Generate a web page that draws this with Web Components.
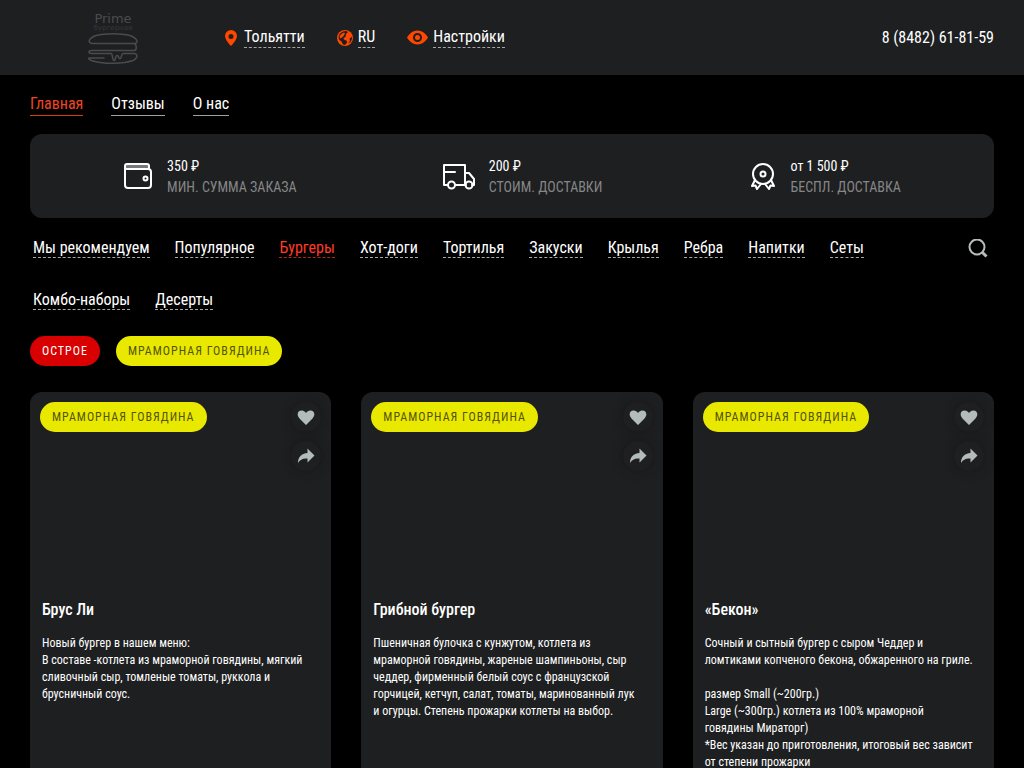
<!DOCTYPE html>
<html lang="ru">
<head>
<meta charset="utf-8">
<meta name="viewport" content="width=device-width, initial-scale=1">
<title>Prime Бургерная</title>
<style>
  body { margin: 0; background: #000; color: #fff; font: 16px/20px "Roboto Condensed", Roboto, sans-serif; overflow-x: hidden; }
</style>
</head>
<body>
<burger-page></burger-page>

<script>
const define = (name, html, extra) => customElements.define(name, class extends HTMLElement {
  connectedCallback() {
    if (this.shadowRoot) return;
    const t = document.createElement('template');
    t.innerHTML = html;
    this.attachShadow({ mode: 'open' }).append(t.content.cloneNode(true));
    if (extra) extra(this, this.shadowRoot);
  }
});

define('brand-logo', `
<style>
  :host { display: block; }
  a { display: flex; flex-direction: column; align-items: center; width: 50px; color: #4a4b4e; text-decoration: none; }
  .name { font: 13px/10px "DejaVu Sans", sans-serif; }
  .sub { font: 7px/8px "DejaVu Sans", sans-serif; color: #37393b; }
  svg { display: block; }
</style>
<a href="#" aria-label="Prime Бургерная">
  <span class="name">Prime</span><span class="sub">бургерная</span>
  <svg width="50" height="33" viewBox="0 0 50 33" fill="none" stroke="currentColor" stroke-width="1.5" stroke-linejoin="round" stroke-linecap="round">
    <path d="M4 11.500C-1 10.500 1 6 8 3.500 17 1 33 1 42 3.500c7 2.500 9 7 5 8H4"/>
    <path d="M46 11.500c3 1 3 7 0 7H4c-4 0-4 3 0 3h19c2 0 1 7 3 7s1-5 3-5 1 3 3 3 1-5 3-5h11c4 0 4 5-1 7-10 3.500-29 3.500-38 1-5-1-7-3-6-3.500h15"/>
  </svg>
</a>`);

define('header-link', `
<style>
  :host { display: flex; align-items: center; }
  a { display: flex; align-items: center; gap: 5px; color: #fff; text-decoration: none; }
  .text { line-height: 21px; border-bottom: 1px dashed #a4a5a5; }
</style>
<a href="#"><slot name="icon"></slot><span class="text"><slot></slot></span></a>`);

define('site-header', `
<style>
  :host { display: block; background: #1e1f21; }
  header { display: flex; align-items: center; height: 75px; padding: 0 30px; }
  brand-logo { margin: 3px 86px 0 58px; }
  nav { display: flex; gap: 32px; flex: 1; padding-bottom: 1px; }
  svg { display: block; fill: #ff4700; }
  .tel { color: #fff; text-decoration: none; }
</style>
<header>
  <brand-logo></brand-logo>
  <nav>
    <header-link><svg slot="icon" width="15" height="17" viewBox="0 0 15 17"><path fill-rule="evenodd" d="M7 1a6 6 0 0 1 6 6c0 4-6 10-6 10S1 11 1 7a6 6 0 0 1 6-6Zm0 4a2.500 2.500 0 1 0 0 5 2.500 2.500 0 0 0 0-5Z"/></svg>Тольятти</header-link>
    <header-link><svg slot="icon" width="16" height="17" viewBox="0 0 16 17"><circle cx="8" cy="9" r="8"/><path fill="#1e1f21" d="M6 2.500 9 2l2 1-2 2-.5 3-2 1 .5 1.500 3 1.500 0 1.500-2 2.500-2-.5-1.500-3-2.500-2-.5-3 1.500-3Z"/><path fill="#ff4700" d="M5 4.500 7 3.500l1 1L6.500 7 5 8.500 3 9.500 2.500 7Z"/><path fill="#1e1f21" d="M14.500 7.500 12.500 10l.5 2-2 2.500 2.500-1.500 1.500-3Z"/></svg>RU</header-link>
    <header-link><svg slot="icon" width="21" height="17" viewBox="0 0 21 17"><path fill-rule="evenodd" d="M10.500 1.500C16 1.500 19.500 6 21 8.500c-1.500 2.500-5 7-10.500 7S1.500 11 0 8.500C1.500 6 5 1.500 10.500 1.500Zm0 2.500a4.500 4.500 0 1 0 0 9 4.500 4.500 0 0 0 0-9Z"/><circle cx="10.500" cy="8.500" r="2.500"/></svg>Настройки</header-link>
  </nav>
  <a class="tel" href="tel:+78482618159">8 (8482) 61-81-59</a>
</header>`);

define('page-nav', `
<style>
  :host { display: block; }
  nav { display: flex; gap: 28px; padding: 18px 0; }
  a { color: #fff; text-decoration: none; line-height: 22px; border-bottom: 1px solid #a0a0a0; }
  a[aria-current] { color: #f04420; border-color: #d83c12; }
</style>
<nav><a href="#" aria-current="page">Главная</a><a href="#">Отзывы</a><a href="#">О нас</a></nav>`);

define('delivery-fact', `
<style>
  :host { display: flex; align-items: center; gap: 14px; }
  dl { margin: 0; display: flex; flex-direction: column-reverse; font-size: 14px; line-height: 21px; }
  dd { margin: 0; }
  dt { color: #868687; text-transform: uppercase; }
  ::slotted(svg) { display: block; }
</style>
<slot name="icon"></slot>
<dl><dt><slot></slot></dt><dd><slot name="value"></slot></dd></dl>`);

define('delivery-bar', `
<style>
  :host { display: flex; justify-content: space-around; align-items: center; padding: 22px 20px 20px; background: #1e1f21; border-radius: 12px; }
  svg { fill: none; stroke: #fff; stroke-width: 2; stroke-linejoin: round; stroke-linecap: round; }
</style>
<delivery-fact><svg slot="icon" width="30" height="30" viewBox="0 0 30 30"><path fill="#77797a" stroke="none" d="M3 3h23v4H3Z"/><path d="M26 7V4q0-2-2-2H4Q2 2 2 4v19q0 3 3 3h20q3 0 3-3V10q0-3-3-3H2"/><circle cx="22.500" cy="16.500" r="2"/></svg>Мин. сумма заказа<span slot="value">350 ₽</span></delivery-fact>
<delivery-fact><svg slot="icon" width="32" height="30" viewBox="0 0 32 30"><path d="M5 23H1V3h21v20H12M1 10h11M22 11h4l5 6v6h-2M22 23h1"/><circle cx="8.500" cy="23" r="3.500"/><circle cx="26" cy="23" r="3.500"/></svg>Стоим. доставки<span slot="value">200 ₽</span></delivery-fact>
<delivery-fact><svg slot="icon" width="28" height="30" viewBox="0 0 28 30"><circle cx="14" cy="12" r="10"/><circle cx="14" cy="12" r="2.500"/><path d="m6 18-3 6 3.500-.5L8 27l4-5M22 18l3 6-3.500-.5L20 27l-4-5"/></svg>Беспл. доставка<span slot="value">от 1 500 ₽</span></delivery-fact>`);

define('menu-nav', `
<style>
  :host { display: flex; align-items: flex-start; justify-content: space-between; gap: 40px; padding: 21px 3px 26px; }
  nav { display: flex; flex-wrap: wrap; gap: 33px 25px; }
  a { color: #fff; text-decoration: none; line-height: 18px; border-bottom: 1px dashed #a8a8a8; }
  a[aria-current] { color: #ff3a26; border-color: #b02a18; }
  button { display: block; margin: 0 3px 0 0; padding: 0; border: 0; background: none; color: #b9bcbd; cursor: pointer; }
  svg { display: block; fill: none; stroke: currentColor; stroke-width: 2; }
</style>
<nav>
  <a href="#">Мы рекомендуем</a><a href="#">Популярное</a><a href="#" aria-current="page">Бургеры</a><a href="#">Хот-доги</a><a href="#">Тортилья</a><a href="#">Закуски</a><a href="#">Крылья</a><a href="#">Ребра</a><a href="#">Напитки</a><a href="#">Сеты</a><a href="#">Комбо-наборы</a><a href="#">Десерты</a>
</nav>
<button aria-label="Поиск"><svg width="20" height="20" viewBox="0 0 20 20"><circle cx="9" cy="8" r="7.500"/><path stroke-width="3" d="m14.500 13.500 4 4"/></svg></button>`);

define('food-tag', `
<style>
  :host { display: block; }
  span, button { display: block; margin: 0; border: 0; padding: 0 12px; border-radius: 15px; background: #e9e900; color: #55530a; font: 12px/30px "Roboto Condensed", Roboto, sans-serif; letter-spacing: 1px; text-transform: uppercase; }
  :host([hot]) button { background: #d80000; color: #fff; }
</style>`, (host, root) => {
  const el = document.createElement(host.hasAttribute('filter') ? 'button' : 'span');
  el.append(document.createElement('slot'));
  root.append(el);
});

define('food-card', `
<style>
  :host { display: block; background: #1e1f21; border-radius: 12px; min-height: 420px; }
  .top { display: flex; justify-content: space-between; align-items: flex-start; height: 196px; padding: 10px 10px 0; }
  .actions { display: flex; flex-direction: column; gap: 9px; }
  button { display: grid; place-items: center; width: 30px; height: 30px; padding: 0; border: 0; border-radius: 50%; background: #1e1f21; box-shadow: 0 0 10px #17181a; color: #b3bbbb; cursor: pointer; }
  svg { display: block; fill: currentColor; }
  .body { padding: 0 12px 20px; }
  h2 { margin: 0 0 13px; font-size: 16px; line-height: 24px; font-weight: 500; }
  p { margin: 0; font-size: 12px; line-height: 17px; white-space: pre-line; }
</style>
<div class="top">
  <food-tag>Мраморная говядина</food-tag>
  <div class="actions">
    <button aria-label="В избранное"><svg width="18" height="18" viewBox="0 0 18 18"><path d="M9 17 2.500 10.500C-1 6.500 1 2.500 4.500 2.500 7 2.500 8.500 4 9 5c.5-1 2-2.500 4.500-2.500 3.500 0 5.500 4 2 8Z"/></svg></button>
    <button aria-label="Поделиться"><svg width="18" height="18" viewBox="0 0 18 18"><path d="M10.500 1.500 17.500 8.500l-7 7v-4C6 11 3 12.500 1 16 1 10 4.500 6.500 10.500 6Z"/></svg></button>
  </div>
</div>
<div class="body"><h2><slot name="title"></slot></h2><p><slot></slot></p></div>`);

define('burger-page', `
<style>
  :host { display: block; }
  main { padding: 0 30px; }
  .filters { display: flex; gap: 16px; }
  .cards { display: grid; grid-template-columns: repeat(3, 1fr); gap: 30px; margin: 26px 0 30px; }
</style>
<site-header></site-header>
<main>
  <page-nav></page-nav>
  <delivery-bar></delivery-bar>
  <menu-nav></menu-nav>
  <div class="filters"><food-tag filter hot>Острое</food-tag><food-tag filter>Мраморная говядина</food-tag></div>
  <div class="cards">
    <food-card><span slot="title">Брус Ли</span>Новый бургер в нашем меню:
В составе -котлета из мраморной говядины, мягкий
сливочный сыр, томленые томаты, руккола и
брусничный соус.</food-card>
    <food-card><span slot="title">Грибной бургер</span>Пшеничная булочка с кунжутом, котлета из
мраморной говядины, жареные шампиньоны, сыр
чеддер, фирменный белый соус с французской
горчицей, кетчуп, салат, томаты, маринованный лук
и огурцы. Степень прожарки котлеты на выбор.</food-card>
    <food-card><span slot="title">«Бекон»</span>Сочный и сытный бургер с сыром Чеддер и
ломтиками копченого бекона, обжаренного на гриле.

размер Small (~200гр.)
Large (~300гр.) котлета из 100% мраморной
говядины Мираторг)
*Вес указан до приготовления, итоговый вес зависит
от степени прожарки</food-card>
  </div>
</main>`);
</script>
</body>
</html>
